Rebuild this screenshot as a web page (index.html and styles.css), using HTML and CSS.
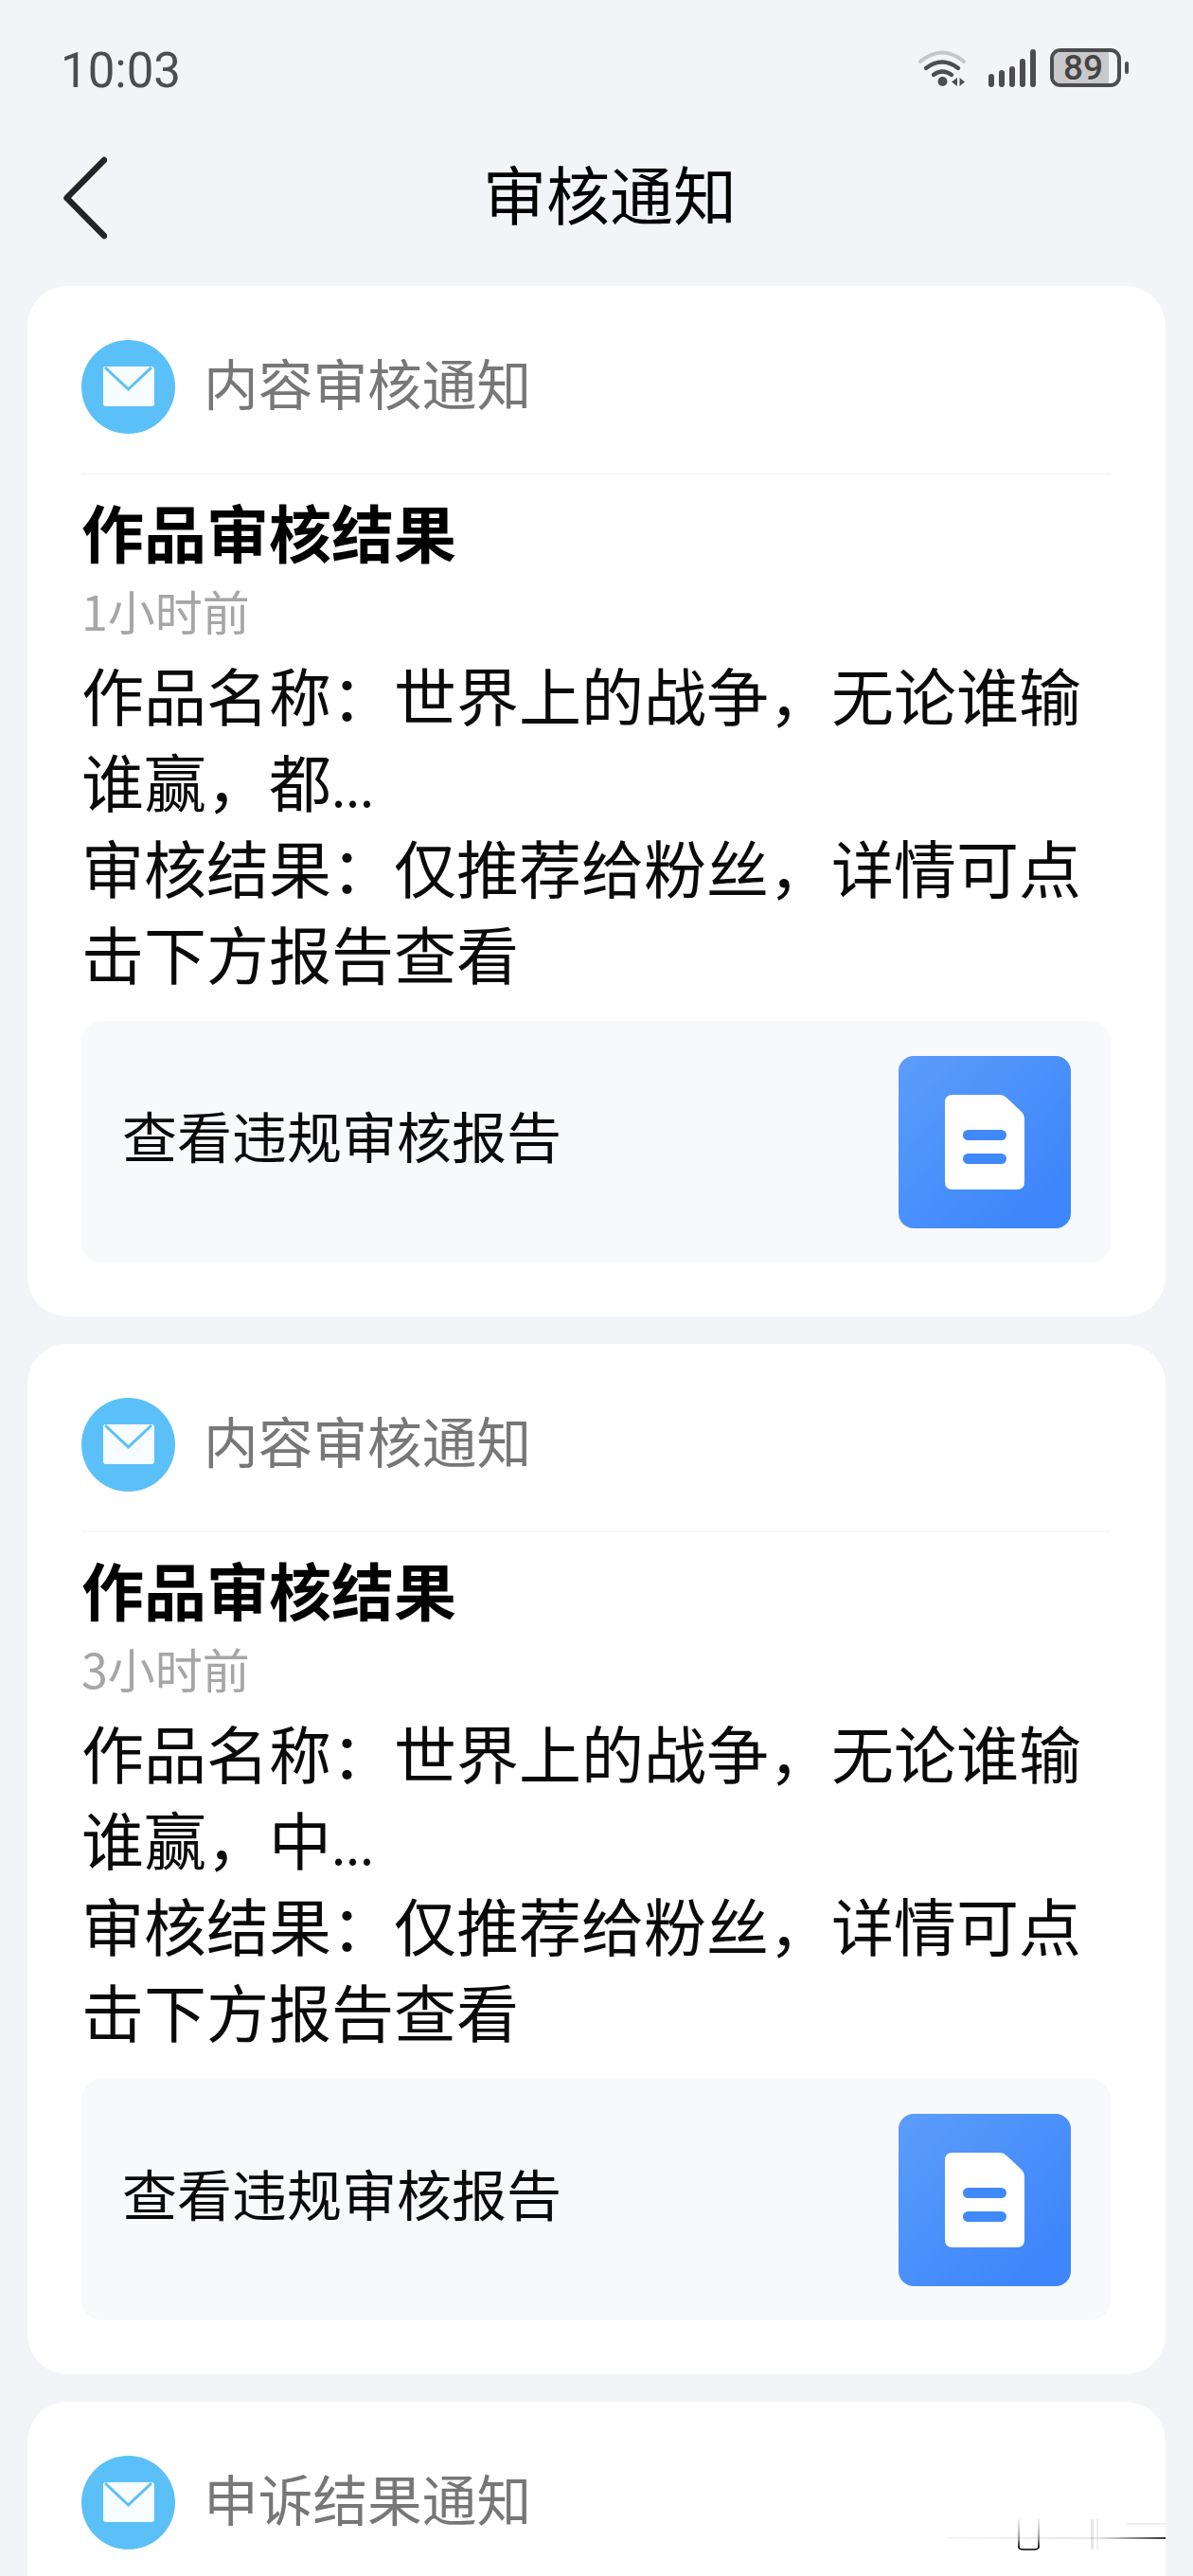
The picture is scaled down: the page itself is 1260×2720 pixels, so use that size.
FILE: index.html
```html
<!DOCTYPE html>
<html lang="zh-CN">
<head>
<meta charset="utf-8">
<title>审核通知</title>
<link rel="stylesheet" href="styles.css">
</head>
<body>
<div class="page">
  <div class="status">
    <span class="clock">10:03</span>
    <div class="status-icons">
      <svg class="wifi" width="50" height="40" viewBox="0 0 50 40" fill="none" stroke-linecap="round">
        <path d="M2 13Q25 -6 48 13" stroke="#c6c6c8" stroke-width="4"/>
        <path d="M8 20Q25 7 42 20" stroke="#4d4d4f" stroke-width="4.4"/>
        <path d="M16 27Q25 20 35 27" stroke="#4d4d4f" stroke-width="4.4"/>
        <circle cx="25.500" cy="34" r="5" fill="#4d4d4f"/>
        <path d="M35 34.500L41 30V39Z M43.500 30L49 34.500L43.500 39Z" fill="#4d4d4f"/>
      </svg>
      <svg class="signal" width="50" height="41" viewBox="0 0 50 41" fill="#4d4d4f">
        <rect x="0" y="27" width="6" height="14" rx="3"/>
        <rect x="11" y="23" width="6" height="18" rx="3"/>
        <rect x="22" y="19" width="6" height="22" rx="3"/>
        <rect x="33" y="11" width="6" height="30" rx="3"/>
        <rect x="44" y="1" width="6" height="40" rx="3"/>
      </svg>
      <div class="battery">
        <div class="battery-fill"></div>
        <span class="battery-level">89</span>
      </div>
      <div class="battery-nub"></div>
    </div>
  </div>
  <div class="nav">
    <svg class="back" width="46" height="88" viewBox="0 0 46 88" fill="none">
      <path d="M43 4L3.500 44L43 84" stroke="#242424" stroke-width="6.500" stroke-linecap="round" stroke-linejoin="round"/>
    </svg>
    <h1 class="nav-title">审核通知</h1>
  </div>

  <section class="card">
    <div class="card-head">
      <svg class="mail" width="99" height="99" viewBox="0 0 99 99">
        <circle cx="49.500" cy="49.500" r="49.500" fill="#5bc0f8"/>
        <path d="M25 28H74Q77 28 77 31V67Q77 70 74 70H26Q23 70 23 67V31Q23 28 25 28Z" fill="#f6fcff"/>
        <path d="M25 29L49.500 52L74 29" fill="none" stroke="#5bc0f8" stroke-width="3"/>
      </svg>
      <span class="head-label">内容审核通知</span>
    </div>
    <h2 class="card-title">作品审核结果</h2>
    <p class="card-time">1小时前</p>
    <div class="card-body">
      <p class="body-line">作品名称：世界上的战争，无论谁输</p>
      <p class="body-line">谁赢，都<span class="dots">...</span></p>
      <p class="body-line">审核结果：仅推荐给粉丝，详情可点</p>
      <p class="body-line">击下方报告查看</p>
    </div>
    <div class="report">
      <span class="report-text">查看违规审核报告</span>
      <div class="report-icon">
        <svg width="84" height="100" viewBox="0 0 84 100">
          <path d="M8 0H58Q62 0 65 3L81 18Q84 21 84 25V92Q84 100 76 100H8Q0 100 0 92V8Q0 0 8 0Z" fill="#fff"/>
          <rect x="19" y="37" width="46" height="11" rx="5.500" fill="#4089fb"/>
          <rect x="19" y="62" width="46" height="11" rx="5.500" fill="#4089fb"/>
        </svg>
      </div>
    </div>
  </section>

  <section class="card">
    <div class="card-head">
      <svg class="mail" width="99" height="99" viewBox="0 0 99 99">
        <circle cx="49.500" cy="49.500" r="49.500" fill="#5bc0f8"/>
        <path d="M25 28H74Q77 28 77 31V67Q77 70 74 70H26Q23 70 23 67V31Q23 28 25 28Z" fill="#f6fcff"/>
        <path d="M25 29L49.500 52L74 29" fill="none" stroke="#5bc0f8" stroke-width="3"/>
      </svg>
      <span class="head-label">内容审核通知</span>
    </div>
    <h2 class="card-title">作品审核结果</h2>
    <p class="card-time">3小时前</p>
    <div class="card-body">
      <p class="body-line">作品名称：世界上的战争，无论谁输</p>
      <p class="body-line">谁赢，中<span class="dots">...</span></p>
      <p class="body-line">审核结果：仅推荐给粉丝，详情可点</p>
      <p class="body-line">击下方报告查看</p>
    </div>
    <div class="report">
      <span class="report-text">查看违规审核报告</span>
      <div class="report-icon">
        <svg width="84" height="100" viewBox="0 0 84 100">
          <path d="M8 0H58Q62 0 65 3L81 18Q84 21 84 25V92Q84 100 76 100H8Q0 100 0 92V8Q0 0 8 0Z" fill="#fff"/>
          <rect x="19" y="37" width="46" height="11" rx="5.500" fill="#4089fb"/>
          <rect x="19" y="62" width="46" height="11" rx="5.500" fill="#4089fb"/>
        </svg>
      </div>
    </div>
  </section>

  <section class="card card-clipped">
    <div class="card-head">
      <svg class="mail" width="99" height="99" viewBox="0 0 99 99">
        <circle cx="49.500" cy="49.500" r="49.500" fill="#5bc0f8"/>
        <path d="M25 28H74Q77 28 77 31V67Q77 70 74 70H26Q23 70 23 67V31Q23 28 25 28Z" fill="#f6fcff"/>
        <path d="M25 29L49.500 52L74 29" fill="none" stroke="#5bc0f8" stroke-width="3"/>
      </svg>
      <span class="head-label">申诉结果通知</span>
    </div>
  </section>

  <svg class="watermark" width="231" height="50" viewBox="0 0 231 50" fill="none">
    <defs>
      <linearGradient id="fadeH" x1="0" x2="1" y1="0" y2="0">
        <stop offset="0" stop-color="#000" stop-opacity="0.04"/>
        <stop offset="0.7" stop-color="#000" stop-opacity="0.1"/>
        <stop offset="1" stop-color="#000" stop-opacity="0.8"/>
      </linearGradient>
      <linearGradient id="fadeV" x1="0" x2="0" y1="0" y2="1">
        <stop offset="0" stop-color="#000" stop-opacity="0.05"/>
        <stop offset="0.7" stop-color="#000" stop-opacity="0.4"/>
        <stop offset="1" stop-color="#000" stop-opacity="0.9"/>
      </linearGradient>
    </defs>
    <rect x="0" y="20" width="231" height="2" fill="url(#fadeH)"/>
    <rect x="190" y="5" width="41" height="1.500" fill="#000" fill-opacity="0.08"/>
    <rect x="152" y="1" width="3" height="32" fill="#000" fill-opacity="0.1"/>
    <rect x="158" y="1" width="2" height="32" fill="#000" fill-opacity="0.06"/>
    <rect x="75" y="1" width="2" height="30" fill="url(#fadeV)"/>
    <rect x="96" y="1" width="2" height="30" fill="url(#fadeV)"/>
    <path d="M76 30Q76 33 81 33H92Q97 33 97 30" stroke="#000" stroke-width="1.500"/>
  </svg>
</div>
</body>
</html>
```
FILE: styles.css
```css
* { box-sizing: border-box; }
html, body { margin: 0; padding: 0; }
body {
  background: #f3f4f7;
  font-family: "Noto Sans CJK SC", "Noto Sans", sans-serif;
}
.page {
  position: relative;
  width: 1260px;
  height: 2720px;
  overflow: hidden;
  padding: 51px 29px 0;
}
.status {
  display: flex;
  justify-content: space-between;
  align-items: center;
  height: 41px;
  padding: 0 39px 0 35px;
}
.clock {
  font-family: Roboto, "Noto Sans", sans-serif;
  font-size: 51px;
  line-height: 41px;
  margin-top: 6px;
  color: #4d4d4f;
}
.status-icons {
  display: flex;
  align-items: center;
}
.wifi { margin-right: 24px; }
.signal { margin-right: 15px; }
.battery {
  position: relative;
  width: 75px;
  height: 41px;
  border: 4px solid #4d4d4f;
  border-radius: 11px;
  display: flex;
  align-items: center;
  justify-content: center;
  overflow: hidden;
}
.battery-fill {
  position: absolute;
  left: 0;
  top: 0;
  bottom: 0;
  width: 86%;
  background: #c9c9cb;
}
.battery-level {
  position: relative;
  font-family: Roboto, sans-serif;
  font-size: 37px;
  font-weight: 500;
  line-height: 1;
  color: #444;
  margin-right: 5px;
}
.battery-nub {
  width: 4px;
  height: 13px;
  margin-left: 4px;
  border-radius: 2px;
  background: #4d4d4f;
}
.nav {
  display: flex;
  align-items: center;
  height: 100px;
  margin-top: 64px;
  padding-left: 38px;
}
.back {
  flex: none;
  margin-top: 6px;
}
.nav-title {
  margin: -7px 0 0 397px;
  font-size: 67px;
  font-weight: 400;
  line-height: 100px;
  color: #000;
}
.card {
  background: #fff;
  border-radius: 42px;
  margin-top: 46px;
  padding: 57px 58px 57px 57px;
  height: 1088px;
}
.card + .card { margin-top: 29px; }
.card-clipped { height: 400px; }
.card-head {
  display: flex;
  align-items: center;
  padding-bottom: 42px;
  border-bottom: 1px solid #f0f0f2;
}
.mail { flex: none; }
.head-label {
  margin: -10px 0 0 30px;
  font-size: 57.7px;
  line-height: 99px;
  color: #777;
}
.card-title {
  margin: 14px 0 0;
  font-size: 66px;
  font-weight: 700;
  line-height: 90px;
  color: #000;
}
.card-time {
  margin: 1px 0 0;
  font-size: 50px;
  line-height: 76px;
  color: #a6a6a6;
}
.card-body {
  margin: 5px 0 0;
  font-size: 66px;
  line-height: 91px;
  color: #0a0a0a;
}
.body-line {
  margin: 0;
  height: 91px;
  white-space: nowrap;
}
.dots {
  font-size: 54px;
  line-height: 0;
}
.report {
  display: flex;
  justify-content: space-between;
  align-items: center;
  margin-top: 27px;
  height: 255px;
  padding: 0 42px 0 43px;
  background: #f8f9fb;
  border-radius: 22px;
}
.report-text {
  font-size: 58px;
  line-height: 80px;
  color: #0a0a0a;
  margin-top: -16px;
}
.report-icon {
  display: flex;
  align-items: center;
  justify-content: center;
  width: 182px;
  height: 182px;
  margin-top: 1px;
  border-radius: 16px;
  background: linear-gradient(135deg, #5c9dfb, #3d86fb 85%);
}
.watermark {
  position: absolute;
  left: 1000px;
  top: 2659px;
}
```
